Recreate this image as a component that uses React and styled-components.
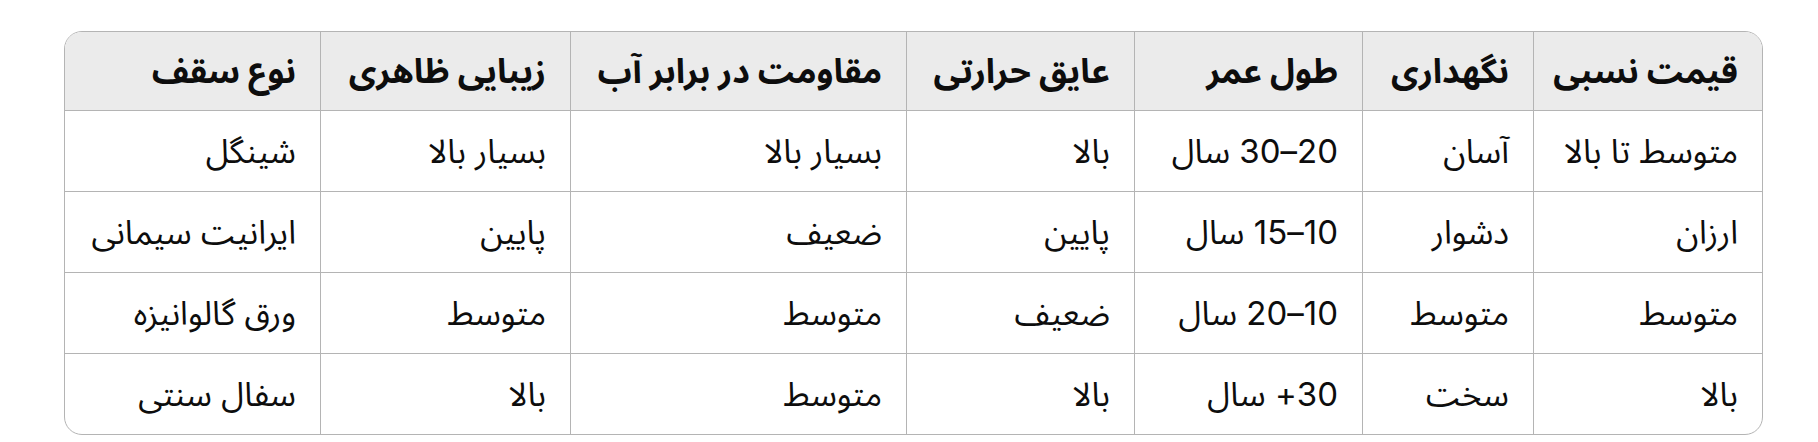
import React from 'react'
import styled, { createGlobalStyle } from 'styled-components'

const GlobalStyle = createGlobalStyle`
	html, body {
		margin: 0;
		padding: 0;
		background: #ffffff;
	}
	body {
		font-family: 'Inter', 'Noto Sans Arabic', 'Noto Sans', 'DejaVu Sans', sans-serif;
		color: #0d0d0d;
	}
`

const columns = [
	{ title: 'قیمت نسبی', width: 229 },
	{ title: 'نگهداری', width: 171 },
	{ title: 'طول عمر', width: 228 },
	{ title: 'عایق حرارتی', width: 228 },
	{ title: 'مقاومت در برابر آب', width: 336 },
	{ title: 'زیبایی ظاهری', width: 250 },
	{ title: 'نوع سقف', width: 255 },
]

const rows = [
	['متوسط تا بالا', 'آسان', '20–30 سال', 'بالا', 'بسیار بالا', 'بسیار بالا', 'شینگل'],
	['ارزان', 'دشوار', '10–15 سال', 'پایین', 'ضعیف', 'پایین', 'ایرانیت سیمانی'],
	['متوسط', 'متوسط', '10–20 سال', 'ضعیف', 'متوسط', 'متوسط', 'ورق گالوانیزه'],
	['بالا', 'سخت', '30+ سال', 'بالا', 'متوسط', 'بالا', 'سفال سنتی'],
]

const Page = styled.div`
	padding: 31px 0 0 64px;
`

const TableBox = styled.div`
	width: 1699px;
	box-sizing: border-box;
	border: 1px solid #b4b4b4;
	border-radius: 18px;
	overflow: hidden;
`

const Table = styled.table`
	width: 100%;
	table-layout: fixed;
	border-collapse: separate;
	border-spacing: 0;
	direction: rtl;
`

const Col = styled.col`
	width: ${(p) => p.$width}px;
`

const HeadCell = styled.th`
	background: #ebebeb;
	font-size: 34px;
	font-weight: 700;
	text-align: right;
	line-height: 48px;
	padding: 15px 24px;
	border-bottom: 1px solid #b4b4b4;
	border-left: 1px solid #b4b4b4;
	white-space: nowrap;

	&:last-child {
		border-left: none;
	}
`

const Cell = styled.td`
	font-size: 33px;
	text-align: right;
	line-height: 48px;
	padding: 16px 24px;
	border-bottom: 1px solid #b4b4b4;
	border-left: 1px solid #b4b4b4;
	white-space: nowrap;

	&:last-child {
		border-left: none;
	}
`

const Row = styled.tr`
	&:last-child ${Cell} {
		border-bottom: none;
	}
`

export default function App() {
	return (
		<Page>
			<GlobalStyle />
			<TableBox>
				<Table>
					<colgroup>
						{columns.map((c) => (
							<Col key={c.title} $width={c.width} />
						))}
					</colgroup>
					<thead>
						<tr>
							{columns.map((c) => (
								<HeadCell key={c.title}>{c.title}</HeadCell>
							))}
						</tr>
					</thead>
					<tbody>
						{rows.map((r, i) => (
							<Row key={i}>
								{r.map((v, j) => (
									<Cell key={j}>{v}</Cell>
								))}
							</Row>
						))}
					</tbody>
				</Table>
			</TableBox>
		</Page>
	)
}
